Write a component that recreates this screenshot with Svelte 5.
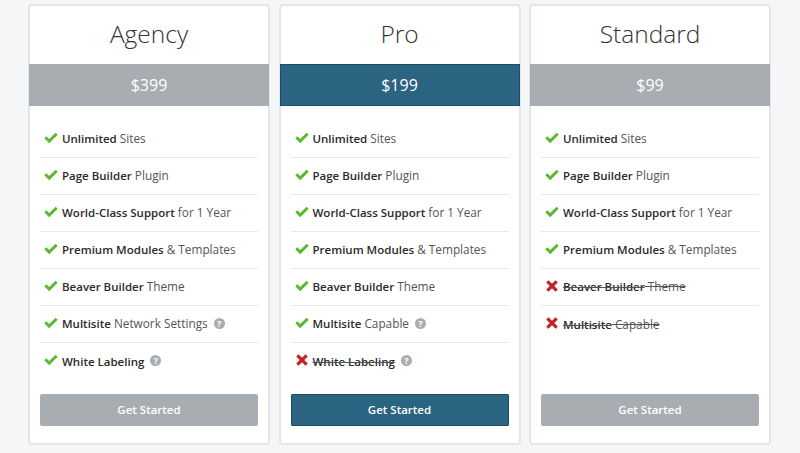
<script>
  const plans = [
    {
      name: 'Agency', price: '$399', featured: false,
      features: [
        { bold: 'Unlimited', rest: 'Sites' },
        { bold: 'Page Builder', rest: 'Plugin' },
        { bold: 'World-Class Support', rest: 'for 1 Year' },
        { bold: 'Premium Modules', rest: '& Templates' },
        { bold: 'Beaver Builder', rest: 'Theme' },
        { bold: 'Multisite', rest: 'Network Settings', help: true },
        { bold: 'White Labeling', rest: '', help: true }
      ]
    },
    {
      name: 'Pro', price: '$199', featured: true,
      features: [
        { bold: 'Unlimited', rest: 'Sites' },
        { bold: 'Page Builder', rest: 'Plugin' },
        { bold: 'World-Class Support', rest: 'for 1 Year' },
        { bold: 'Premium Modules', rest: '& Templates' },
        { bold: 'Beaver Builder', rest: 'Theme' },
        { bold: 'Multisite', rest: 'Capable', help: true },
        { bold: 'White Labeling', rest: '', help: true, off: true }
      ]
    },
    {
      name: 'Standard', price: '$99', featured: false,
      features: [
        { bold: 'Unlimited', rest: 'Sites' },
        { bold: 'Page Builder', rest: 'Plugin' },
        { bold: 'World-Class Support', rest: 'for 1 Year' },
        { bold: 'Premium Modules', rest: '& Templates' },
        { bold: 'Beaver Builder', rest: 'Theme', off: true },
        { bold: 'Multisite', rest: 'Capable', off: true }
      ]
    }
  ];
</script>

<div class="page">
  {#each plans as plan}
    <div class="card" class:featured={plan.featured}>
      <h2 class="title">{plan.name}</h2>
      <div class="price">{plan.price}</div>
      <ul class="features">
        {#each plan.features as f}
          <li class="feature">
            {#if f.off}
              <svg class="mark" viewBox="0 0 14 14"><path d="M1.2 3.4 3.4 1.2 7 4.8l3.6-3.6 2.2 2.2L9.2 7l3.6 3.6-2.2 2.2L7 9.2l-3.6 3.6-2.2-2.2L4.8 7z" fill="#c5221f"/></svg>
            {:else}
              <svg class="mark" viewBox="0 0 14 14"><path d="M0.3 7.3 2.3 5.3 5.2 8.1 11.6 1.7 13.7 3.8 5.2 12.2z" fill="#5cb82e"/></svg>
            {/if}
            <span class="label" class:off={f.off}><b>{f.bold}</b> {f.rest}</span>
            {#if f.help}
              <span class="help">?</span>
            {/if}
          </li>
        {/each}
      </ul>
      <button class="cta">Get Started</button>
    </div>
  {/each}
</div>

<style>
  :global(body) {
    background: #f4f6f8;
    font-family: "Open Sans", "Lato", sans-serif;
  }

  .page {
    display: grid;
    grid-template-columns: repeat(3, 242px);
    column-gap: 8.5px;
    width: 743px;
    height: 453px;
    box-sizing: border-box;
    padding: 4px 0 8px 28px;
  }

  .card {
    display: flex;
    flex-direction: column;
    background: #fff;
    border: 2px solid #e3e6e8;
    border-radius: 4px;
    box-sizing: border-box;
    height: 441px;
  }

  .title {
    margin: 0;
    height: 58px;
    line-height: 56px;
    text-align: center;
    font-size: 24.5px;
    font-weight: 300;
    color: #333;
  }

  .price {
    margin: 0 -1px;
    height: 42px;
    line-height: 42px;
    background: #a8adb1;
    color: #fff;
    text-align: center;
    font-size: 16px;
  }

  .featured .price,
  .featured .cta {
    background: #2a6480;
    box-shadow: inset 0 0 0 1px #1c4f67;
  }

  .features {
    list-style: none;
    margin: 0;
    padding: 15px 10px 0;
    height: 288px;
    box-sizing: border-box;
  }

  .feature {
    display: flex;
    align-items: center;
    height: 37px;
    box-sizing: border-box;
    border-bottom: 1px solid #e6e8ea;
    padding: 0 0 2px 4px;
    font-size: 11.8px;
    color: #555;
    white-space: nowrap;
  }

  .feature:last-child {
    border-bottom: none;
  }

  .mark {
    width: 14px;
    height: 14px;
    flex: none;
    margin: -1px 4px 0 0;
  }

  .label b {
    font-size: 11.5px;
    font-weight: 600;
    color: #2a2a2a;
  }

  .label.off {
    text-decoration: line-through;
    text-decoration-color: #555;
    text-decoration-thickness: 1px;
  }

  .help {
    display: inline-block;
    width: 11px;
    height: 11px;
    margin-left: 6px;
    border-radius: 50%;
    background: #a8adb1;
    color: #fff;
    font-size: 9px;
    font-weight: 700;
    line-height: 11px;
    text-align: center;
  }

  .cta {
    display: block;
    margin: 0 10px;
    height: 32px;
    padding: 0 0 2px;
    border: none;
    border-radius: 2px;
    background: #a8adb1;
    color: #fff;
    font-family: inherit;
    font-size: 11.5px;
    font-weight: 600;
  }
</style>
